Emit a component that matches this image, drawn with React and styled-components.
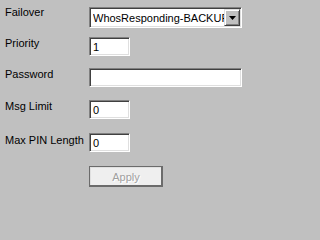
import React from "react";
import styled, { createGlobalStyle } from "styled-components";

const Global = createGlobalStyle`
  html, body { margin: 0; padding: 0; background: #c0c0c0; }
  body { font-family: "Liberation Sans", Arial, sans-serif; font-size: 11px; color: #000; }
`;

const Panel = styled.div`
  width: 246px;
  height: 200px;
  box-sizing: border-box;
  padding: 7px 0 0 5px;
  display: flex;
  flex-direction: column;
`;

const Row = styled.div`
  display: grid;
  grid-template-columns: 84px auto;
  align-items: start;
  margin-top: ${(p) => p.$gap || 0}px;
`;

const Label = styled.div`
  line-height: 13px;
  font-size: 11px;
  margin-top: ${(p) => p.$off || 0}px;
  white-space: nowrap;
`;

const Sunken = styled.div`
  box-sizing: border-box;
  width: ${(p) => p.$w}px;
  height: ${(p) => p.$h || 19}px;
  background: #fff;
  border-top: 1px solid #808080;
  border-left: 1px solid #808080;
  border-bottom: 1px solid #fff;
  border-right: 1px solid #fff;
  box-shadow: inset 1px 1px 0 #404040, inset -1px -1px 0 #dfdfdf;
  display: flex;
  align-items: center;
  padding-left: 3px;
  overflow: hidden;
  white-space: nowrap;
  font-size: 11px;
`;

const Select = styled(Sunken)`
  padding-right: 1px;
  justify-content: space-between;
`;

const SelectText = styled.span`
  overflow: hidden;
  flex: 1;
  font-size: 11px;
`;

const ArrowBtn = styled.div`
  box-sizing: border-box;
  width: 16px;
  height: 17px;
  flex: none;
  background: #c0c0c0;
  border-top: 1px solid #dfdfdf;
  border-left: 1px solid #dfdfdf;
  border-bottom: 1px solid #404040;
  border-right: 1px solid #404040;
  box-shadow: inset 1px 1px 0 #fff, inset -1px -1px 0 #808080;
  display: flex;
  align-items: center;
  justify-content: center;
`;

const Button = styled.div`
  box-sizing: border-box;
  width: 74px;
  height: 21px;
  background: #efefef;
  border: 1px solid #6b6b6b;
  box-shadow: inset -1px -1px 0 #6b6b6b, inset 1px 1px 0 #e0e0e0;
  display: flex;
  align-items: center;
  justify-content: center;
  color: #a0a0a0;
  text-shadow: 1px 1px 0 #fff;
  font-size: 11px;
`;

export default function App() {
  return (
    <>
      <Global />
      <Panel>
        <Row>
          <Label $off={-1}>Failover</Label>
          <Select $w={153} $h={21}>
            <SelectText>WhosResponding-BACKUP</SelectText>
            <ArrowBtn>
              <svg width="7" height="4" viewBox="0 0 7 4">
                <path d="M0 0h7L3.5 4z" fill="#000" />
              </svg>
            </ArrowBtn>
          </Select>
        </Row>
        <Row $gap={9}>
          <Label $off={0}>Priority</Label>
          <Sunken $w={41}>1</Sunken>
        </Row>
        <Row $gap={12}>
          <Label $off={0}>Password</Label>
          <Sunken $w={153} />
        </Row>
        <Row $gap={13}>
          <Label $off={0}>Msg Limit</Label>
          <Sunken $w={41}>0</Sunken>
        </Row>
        <Row $gap={14}>
          <Label $off={1}>Max PIN Length</Label>
          <Sunken $w={41}>0</Sunken>
        </Row>
        <Row $gap={14}>
          <span />
          <Button>Apply</Button>
        </Row>
      </Panel>
    </>
  );
}
